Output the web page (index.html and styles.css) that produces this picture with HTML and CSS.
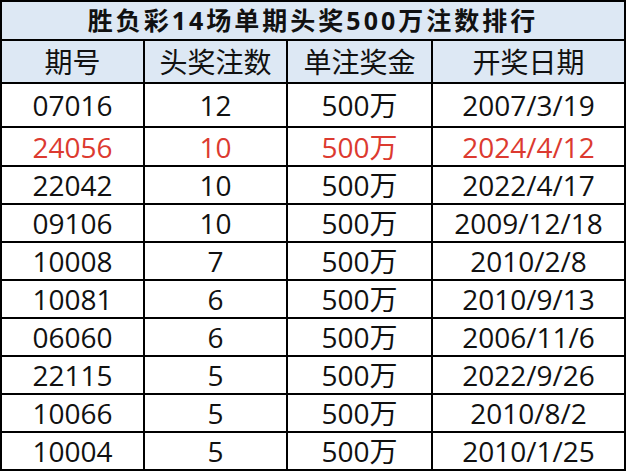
FILE: index.html
```html
<!DOCTYPE html>
<html lang="zh-CN">
<head>
<meta charset="utf-8">
<title>胜负彩14场单期头奖500万注数排行</title>
<link rel="stylesheet" href="styles.css">
</head>
<body>
<div class="board">
  <div class="title">胜负彩14场单期头奖500万注数排行</div>
  <div class="head">期号</div>
  <div class="head">头奖注数</div>
  <div class="head">单注奖金</div>
  <div class="head">开奖日期</div>

  <div class="cell">07016</div><div class="cell">12</div><div class="cell">500万</div><div class="cell">2007/3/19</div>
  <div class="cell hot">24056</div><div class="cell hot">10</div><div class="cell hot">500万</div><div class="cell hot">2024/4/12</div>
  <div class="cell">22042</div><div class="cell">10</div><div class="cell">500万</div><div class="cell">2022/4/17</div>
  <div class="cell">09106</div><div class="cell">10</div><div class="cell">500万</div><div class="cell">2009/12/18</div>
  <div class="cell">10008</div><div class="cell">7</div><div class="cell">500万</div><div class="cell">2010/2/8</div>
  <div class="cell">10081</div><div class="cell">6</div><div class="cell">500万</div><div class="cell">2010/9/13</div>
  <div class="cell">06060</div><div class="cell">6</div><div class="cell">500万</div><div class="cell">2006/11/6</div>
  <div class="cell">22115</div><div class="cell">5</div><div class="cell">500万</div><div class="cell">2022/9/26</div>
  <div class="cell">10066</div><div class="cell">5</div><div class="cell">500万</div><div class="cell">2010/8/2</div>
  <div class="cell">10004</div><div class="cell">5</div><div class="cell">500万</div><div class="cell">2010/1/25</div>
</div>
</body>
</html>
```

FILE: styles.css
```css
html, body {
  margin: 0;
  padding: 0;
  background: #ffffff;
}

.board {
  display: grid;
  grid-template-columns: 141px 141px 143px 191px;
  grid-template-rows: 37px 41px 42px 37px repeat(8, 36px);
  gap: 2px;
  padding: 2px;
  width: max-content;
  background: #000000;
  font-family: "Open Sans", "Noto Sans CJK SC", sans-serif;
  color: #111111;
}

.title {
  grid-column: 1 / -1;
  background: #dde8f4;
  display: flex;
  align-items: center;
  justify-content: center;
  font-weight: 700;
  font-size: 25px;
  letter-spacing: 3px;
  line-height: 1;
}

.head {
  background: #dde8f4;
  display: flex;
  align-items: center;
  justify-content: center;
  font-size: 28px;
  line-height: 1;
}

.cell {
  background: #ffffff;
  display: flex;
  align-items: center;
  justify-content: center;
  font-size: 28px;
  line-height: 1;
}

.hot {
  color: #dc3a30;
}
```
